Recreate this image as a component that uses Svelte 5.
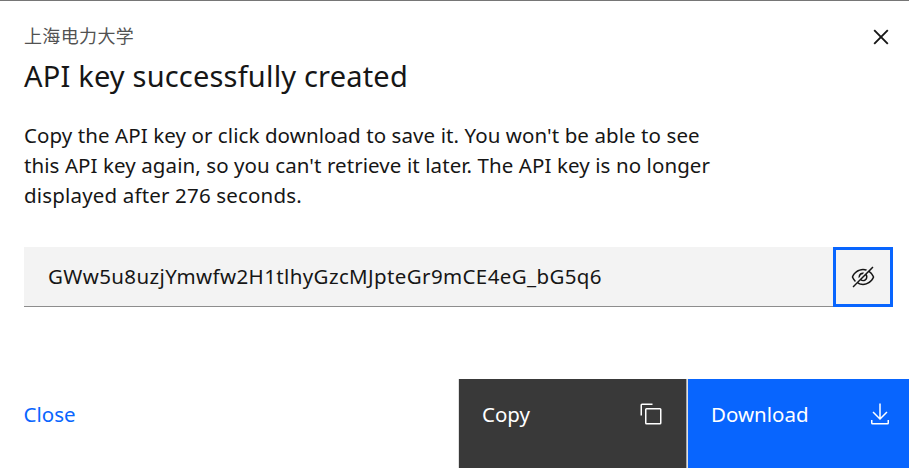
<script>
  const message = [
    "Copy the API key or click download to save it. You won't be able to see",
    "this API key again, so you can't retrieve it later. The API key is no longer",
    'displayed after 276 seconds.'
  ];
  const apiKey = 'GWw5u8uzjYmwfw2H1tlhyGzcMJpteGr9mCE4eG_bG5q6';
</script>

<div class="modal">
  <header>
    <div>
      <p class="label">上海电力大学</p>
      <h1>API key successfully created</h1>
    </div>
    <button class="dismiss" aria-label="Dismiss">
      <svg width="16" height="16" viewBox="0 0 16 16"><path d="M1.2 1.2l13.6 13.6M14.8 1.2L1.2 14.8" fill="none" stroke="#161616" stroke-width="1.9" /></svg>
    </button>
  </header>

  <p class="message">
    {#each message as line}<span class="line">{line}</span>{/each}
  </p>

  <div class="field">
    <div class="value"><span>{apiKey}</span></div>
    <button class="toggle" aria-label="Hide API key">
      <svg width="24" height="24" viewBox="0 0 16 16" fill="#161616">
        <path d="M2.6,11.3l0.7-0.7C2.6,9.8,1.9,9,1.5,8c1-2.5,3.8-4.5,6.5-4.5c0.7,0,1.4,0.1,2,0.4l0.8-0.8C9.9,2.7,9,2.5,8,2.5C4.7,2.6,1.7,4.7,0.5,7.8c0,0.1,0,0.2,0,0.3C1,9.3,1.7,10.4,2.6,11.3z" />
        <path d="M6 7.9c.1-1 .9-1.8 1.8-1.8l.9-.9C7.2 4.7 5.5 5.6 5.1 7.2 5 7.7 5 8.3 5.1 8.8L6 7.9zM15.5 7.8c-.6-1.5-1.6-2.8-2.9-3.7L15 1.7 14.3 1 1 14.3 1.7 15l2.6-2.6c1.1.7 2.4 1 3.7 1.1 3.3-.1 6.3-2.2 7.5-5.3C15.5 8.1 15.5 7.9 15.5 7.8zM10 8c0 1.1-.9 2-2 2-.3 0-.7-.1-1-.3L9.7 7C9.9 7.3 10 7.6 10 8zM8 12.5c-1 0-2.1-.3-3-.8l1.3-1.3c1.4.9 3.2.6 4.2-.8.7-1 .7-2.4 0-3.4l1.4-1.4c1.1.8 2 1.9 2.6 3.2C13.4 10.5 10.6 12.5 8 12.5z" />
      </svg>
    </button>
  </div>

  <footer>
    <button class="close"><span>Close</span></button>
    <button class="copy">
      <span>Copy</span>
      <svg width="24" height="24" viewBox="0 0 32 32" fill="#fff">
        <path d="M28,10V28H10V10H28m0-2H10a2,2,0,0,0-2,2V28a2,2,0,0,0,2,2H28a2,2,0,0,0,2-2V10a2,2,0,0,0-2-2Z" />
        <path d="M4,18H2V4A2,2,0,0,1,4,2H18V4H4Z" />
      </svg>
    </button>
    <button class="download">
      <span>Download</span>
      <svg width="24" height="24" viewBox="0 0 32 32" fill="#fff">
        <path d="M26 24v4H6v-4H4v4a2 2 0 0 0 2 2h20a2 2 0 0 0 2-2v-4zM26 14l-1.41-1.41L17 20.17V2h-2v18.17l-7.59-7.58L6 14l10 10z" />
      </svg>
    </button>
  </footer>
</div>

<style>
  .modal {
    box-sizing: border-box;
    width: 909px;
    height: 468px;
    display: flex;
    flex-direction: column;
    border-top: 1px solid #767676;
    background: #fff;
    color: #161616;
    font-family: 'Noto Sans', 'Noto Sans CJK SC', sans-serif;
    font-size: 20.5px;
    overflow: hidden;
  }
  p, h1 { margin: 0; font-weight: 400; }
  button {
    border: 0;
    padding: 0;
    margin: 0;
    background: none;
    font: inherit;
    color: inherit;
    text-align: left;
  }
  svg { display: block; flex: none; }
  header {
    display: flex;
    justify-content: space-between;
    padding: 22px 20px 0 24px;
    height: 94px;
    box-sizing: border-box;
  }
  .label {
    font-family: 'Noto Sans CJK SC', sans-serif;
    font-size: 18px;
    line-height: 24px;
    letter-spacing: 0.35px;
    color: #525252;
  }
  h1 {
    margin-top: 9px;
    font-size: 29px;
    line-height: 40px;
    letter-spacing: 0.19px;
    white-space: nowrap;
  }
  .dismiss { align-self: flex-start; padding-top: 6px; }
  .message {
    height: 90px;
    margin-top: 25px;
    padding-left: 24px;
    line-height: 30px;
    letter-spacing: 0.085px;
  }
  .line { display: block; width: max-content; }
  .line:last-child { letter-spacing: 0.17px; }
  .field {
    display: flex;
    height: 60px;
    margin: 37px 16px 0 24px;
    background: #f3f3f3;
  }
  .value {
    flex: 1;
    padding-left: 24px;
    line-height: 59px;
    letter-spacing: 0.375px;
    border-bottom: 1px solid #8d8d8d;
    box-sizing: border-box;
  }
  .toggle {
    width: 60px;
    box-sizing: border-box;
    border: 3px solid #0865fe;
    display: flex;
    align-items: center;
    justify-content: center;
  }
  footer {
    display: flex;
    height: 89px;
    margin-top: 72px;
    line-height: 30px;
  }
  footer button {
    box-sizing: border-box;
    display: flex;
    justify-content: space-between;
    align-items: flex-start;
    padding-top: 20px;
  }
  footer svg { margin-top: 3px; }
  .close { width: 458px; padding-left: 23.5px; color: #0865fe; }
  .copy {
    width: 229px;
    padding-left: 23px;
    padding-right: 23px;
    background: #393939;
    color: #fff;
    border-left: 1px solid #e0e0e0;
    border-right: 1px solid #a8a8a8;
  }
  .download {
    flex: 1;
    padding-left: 23px;
    padding-right: 17px;
    background: #0865fe;
    color: #fff;
    border-left: 1px solid #e0e0e0;
  }
</style>
